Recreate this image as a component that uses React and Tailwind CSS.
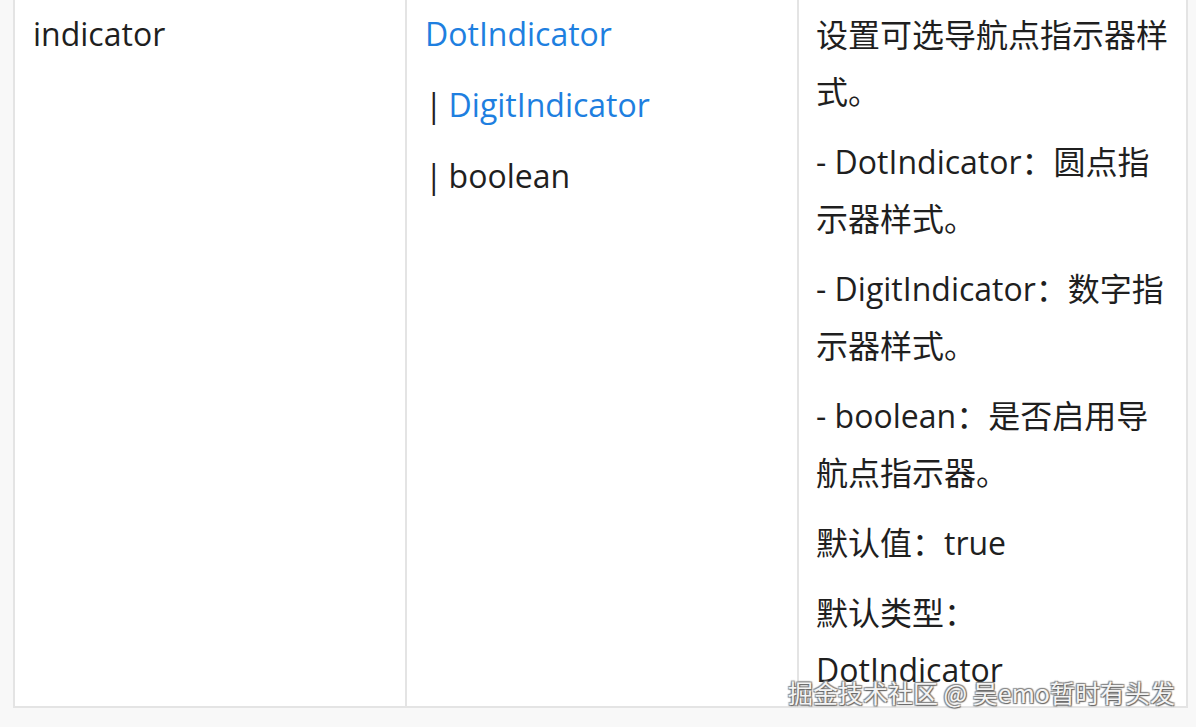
import React from "react";

const font = { fontFamily: '"Open Sans", "Noto Sans CJK SC", sans-serif' };

function P({ children, last }) {
  return <p className={last ? "" : "mb-[13px]"}>{children}</p>;
}

export default function App() {
  return (
    <div
      className="relative w-[1196px] h-[727px] overflow-hidden bg-[#f8f8f8] text-[32px] leading-[57px] text-[#1f1f1f]"
      style={font}
    >
      <div className="ml-[13px] w-[1175px] h-[708px] grid grid-cols-[392px_392px_389px] border-l-2 border-b-2 border-[#e4e4e4] bg-white">
        <div className="border-r-2 border-[#e4e4e4] pl-[18px] pt-[5px]">indicator</div>
        <div className="border-r-2 border-[#e4e4e4] pl-[18px] pt-[5px]">
          <p className="mb-[14px] text-[#1e7fe0]">DotIndicator</p>
          <p className="mb-[14px]">
            |<span className="ml-[6px] text-[#1e7fe0]">DigitIndicator</span>
          </p>
          <p>
            |<span className="ml-[6px]">boolean</span>
          </p>
        </div>
        <div className="border-r-2 border-[#e4e4e4] pl-[17px] pr-[9px] pt-[6px]">
          <P>设置可选导航点指示器样式。</P>
          <P>- DotIndicator：圆点指示器样式。</P>
          <P>- DigitIndicator：数字指示器样式。</P>
          <P>- boolean：是否启用导航点指示器。</P>
          <P>默认值：true</P>
          <P last>
            默认类型：
            <br />
            DotIndicator
          </P>
        </div>
      </div>
      <div
        className="absolute right-[21px] bottom-[19px] text-[25px] leading-[32px] text-[#f4f4f4] whitespace-nowrap"
        style={{
          fontFamily: '"Noto Sans CJK SC", sans-serif',
          textShadow:
            "1px 1px 1px #666, -1px -1px 1px #888, 1px -1px 1px #888, -1px 1px 1px #888",
        }}
      >
        掘金技术社区 @ 吴emo暂时有头发
      </div>
    </div>
  );
}
